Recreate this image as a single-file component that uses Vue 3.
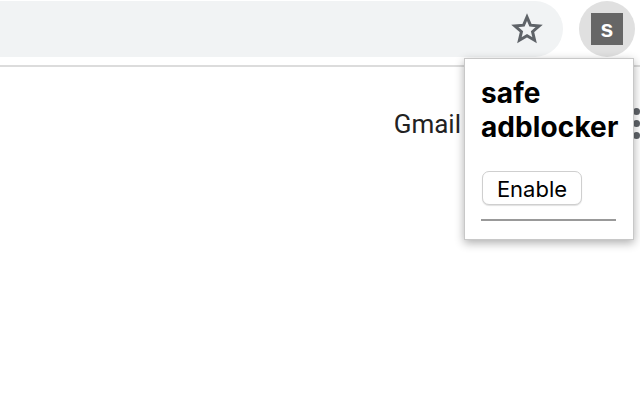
<script setup>
</script>

<template>
  <div class="screen">
    <header class="toolbar">
      <div class="omnibox">
        <svg class="star" width="32" height="32" viewBox="0 0 30 30" aria-hidden="true">
          <path d="M15 3.8l3.2 7.6 8.2.7-6.2 5.4 1.9 8-7.1-4.2-7.1 4.2 1.9-8-6.2-5.4 8.2-.7z" fill="none" stroke="#5f6368" stroke-width="2.8" stroke-linejoin="miter" />
        </svg>
      </div>
      <div class="ext-button">
        <div class="ext-icon">s</div>
      </div>
    </header>
    <main class="page">
      <span class="gmail">Gmail</span>
      <div class="dots"><i></i><i></i><i></i></div>
    </main>
    <section class="popup">
      <h1 class="title">safe adblocker</h1>
      <button class="enable">Enable</button>
      <div class="rule"></div>
    </section>
  </div>
</template>

<style>
html, body { margin: 0; background: #fff; }
</style>

<style scoped>
.screen {
  position: relative;
  width: 640px;
  height: 400px;
  overflow: hidden;
  background: #fff;
  font-family: "Liberation Sans", Arial, sans-serif;
}
.toolbar {
  display: flex;
  align-items: flex-start;
  height: 65px;
  border-bottom: 2px solid #dcdcdc;
  box-sizing: content-box;
}
.omnibox {
  width: 563px;
  height: 56px;
  margin-top: 1px;
  background: #f1f3f4;
  border-radius: 0 28px 28px 0;
  display: flex;
  align-items: center;
  justify-content: flex-end;
  padding-right: 20px;
  box-sizing: border-box;
}
.star { display: block; }
.ext-button {
  width: 56px;
  height: 56px;
  margin: 1px 0 0 16px;
  border-radius: 50%;
  background: #e0e0e0;
  display: flex;
  align-items: center;
  justify-content: center;
  flex: none;
}
.ext-icon {
  width: 32px;
  height: 32px;
  background: #666;
  color: #fff;
  font-family: "Liberation Sans", Arial, sans-serif;
  font-weight: 700;
  font-size: 23px;
  line-height: 32px;
  text-align: center;
}
.page {
  display: flex;
  align-items: flex-start;
  justify-content: flex-end;
  padding-top: 41px;
  width: 640px;
}
.gmail {
  font-size: 26px;
  line-height: 32px;
  color: #222;
  margin-right: 172px;
  font-family: Roboto, "Liberation Sans", sans-serif;
}
.dots {
  display: flex;
  flex-direction: column;
  gap: 5px;
  flex: none;
}
.dots i {
  display: block;
  width: 7px;
  height: 7px;
  border-radius: 50%;
  background: #5f6368;
}
.popup {
  position: absolute;
  left: 464px;
  top: 58px;
  width: 170px;
  height: 182px;
  box-sizing: border-box;
  background: #fff;
  border: 1px solid #c8c8c8;
  box-shadow: 0 3px 9px rgba(0, 0, 0, 0.32);
  padding: 17px 16px 0 16px;
}
.title {
  margin: 0;
  font-family: Inter, "Liberation Sans", sans-serif;
  font-weight: 700;
  font-size: 28px;
  line-height: 34px;
  color: #000;
  letter-spacing: 0.1px;
}
.enable {
  display: block;
  margin: 27px 0 0 1px;
  width: 100px;
  height: 34px;
  padding: 1px 0 0;
  background: #fff;
  border: 1px solid #cfcfcf;
  border-radius: 7px;
  box-shadow: 0 1px 1px rgba(0,0,0,0.12);
  font-family: Inter, "Liberation Sans", sans-serif;
  font-size: 22px;
  color: #000;
}
.rule {
  margin-top: 14px;
  width: 135px;
  height: 2px;
  background: #999;
}
</style>
